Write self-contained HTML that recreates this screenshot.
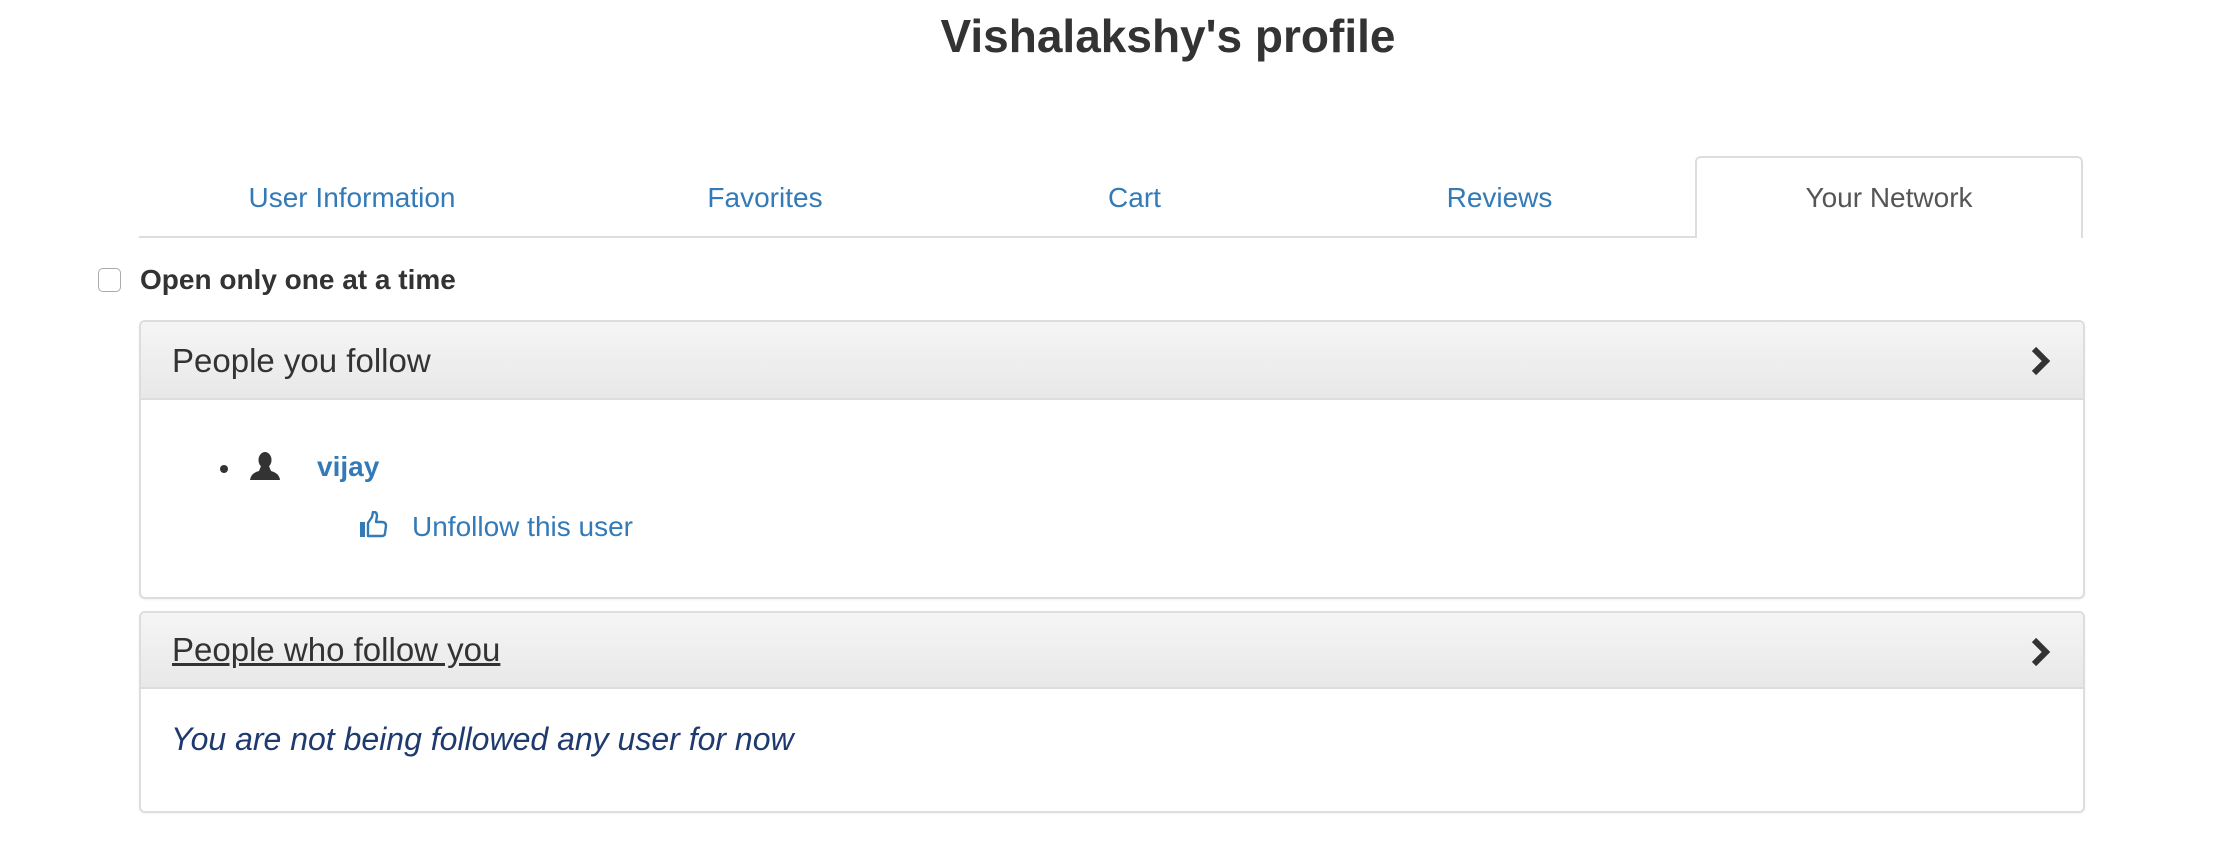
<!DOCTYPE html>
<html><head><meta charset="utf-8"><style>
*{box-sizing:border-box;margin:0;padding:0}
body{width:2222px;height:848px;background:#fff;font-family:"Liberation Sans",Arial,sans-serif;position:relative;overflow:hidden;color:#333}
.a{position:absolute;white-space:nowrap}
h1{position:absolute;left:0;width:2336px;text-align:center;top:6px;font-size:46px;font-weight:bold;line-height:60px;color:#333}
.tab{position:absolute;top:156px;height:82px;font-size:28px;color:#337ab7;text-align:center;line-height:84px;border-bottom:2px solid #ddd}
.tab.act{border:2px solid #ddd;border-bottom:none;border-radius:6px 6px 0 0;color:#555;background:#fff;line-height:80px}
.panel{position:absolute;left:139px;width:1946px;border:2px solid #ddd;border-radius:6px;box-shadow:0 1px 2px rgba(0,0,0,.05);overflow:hidden}
.ph{position:absolute;left:0;right:0;top:0;background:linear-gradient(#f5f5f5,#e8e8e8);border-bottom:2px solid #ddd}
.pt{position:absolute;left:31px;font-size:33px;color:#333}
.chev{position:absolute;right:32px}
</style></head><body>
<h1>Vishalakshy's profile</h1>
<div class="tab" style="left:139px;width:426px">User Information</div>
<div class="tab" style="left:565px;width:400px">Favorites</div>
<div class="tab" style="left:965px;width:339px">Cart</div>
<div class="tab" style="left:1304px;width:391px">Reviews</div>
<div class="tab act" style="left:1695px;width:388px">Your Network</div>

<div class="a" style="left:98px;top:268px;width:23px;height:24px;border:1.5px solid #aaa;border-radius:5px"></div>
<div class="a" style="left:140px;top:263px;font-size:28px;font-weight:bold;line-height:34px">Open only one at a time</div>

<div class="panel" style="top:320px;height:279px">
 <div class="ph" style="height:78px">
  <div class="pt" style="top:20px;line-height:38px">People you follow</div>
  <svg class="chev" style="top:24px" width="22" height="30" viewBox="0 0 22 30"><path d="M5 3 L17 15 L5 27" fill="none" stroke="#333" stroke-width="6"/></svg>
 </div>
</div>
<div class="a" style="left:220px;top:465px;width:8px;height:8px;border-radius:50%;background:#333"></div>
<svg class="a" style="left:250px;top:452px" width="30" height="28" viewBox="0 0 30 28"><ellipse cx="15" cy="8" rx="6.5" ry="8" fill="#333"/><path d="M11 14 L19 14 L21 19 Q29 21 30 28 L0 28 Q1 21 9 19 Z" fill="#333"/></svg>
<div class="a" style="left:317px;top:450px;font-size:28px;font-weight:bold;color:#337ab7;line-height:34px">vijay</div>
<svg class="a" style="left:360px;top:511px" width="28" height="27" viewBox="0 0 28 27"><rect x="0" y="11" width="5" height="15" fill="#337ab7"/><path d="M8 12 L8 25 L22 25 Q25 25 25 22 L26 15 Q26 11 22 11 L16 11 L17 5 Q17 1 14 1 L13 1 L12 6 Z" fill="none" stroke="#337ab7" stroke-width="2.4" stroke-linejoin="round"/></svg>
<div class="a" style="left:412px;top:510px;font-size:28px;color:#337ab7;line-height:34px">Unfollow this user</div>

<div class="panel" style="top:611px;height:202px">
 <div class="ph" style="height:76px">
  <div class="pt" style="top:18px;line-height:38px;text-decoration:underline">People who follow you</div>
  <svg class="chev" style="top:24px" width="22" height="30" viewBox="0 0 22 30"><path d="M5 3 L17 15 L5 27" fill="none" stroke="#333" stroke-width="6"/></svg>
 </div>
</div>
<div class="a" style="left:171px;top:720px;font-size:32px;font-style:italic;color:#1e3a6e;line-height:38px">You are not being followed any user for now</div>
</body></html>
